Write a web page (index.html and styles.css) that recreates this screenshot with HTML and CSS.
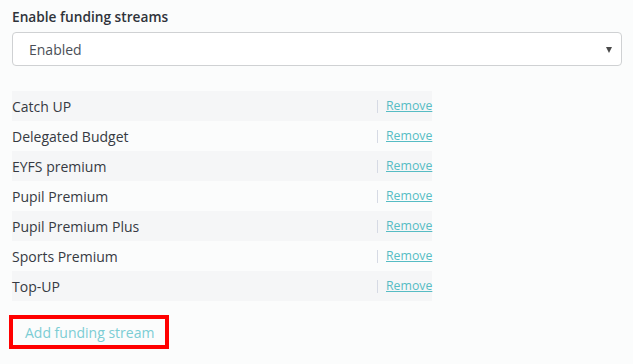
FILE: index.html
```html
<!DOCTYPE html>
<html>
<head>
<meta charset="utf-8">
<link rel="stylesheet" href="styles.css">
</head>
<body>
<div class="page">
  <div class="label">Enable funding streams</div>
  <div class="select">
    <span class="select-value">Enabled</span>
    <span class="caret"></span>
  </div>
  <div class="list">
    <div class="row striped"><span class="name">Catch UP</span><span class="action"><span class="sep"></span><a class="remove">Remove</a></span></div>
    <div class="row"><span class="name">Delegated Budget</span><span class="action"><span class="sep"></span><a class="remove">Remove</a></span></div>
    <div class="row striped"><span class="name">EYFS premium</span><span class="action"><span class="sep"></span><a class="remove">Remove</a></span></div>
    <div class="row"><span class="name">Pupil Premium</span><span class="action"><span class="sep"></span><a class="remove">Remove</a></span></div>
    <div class="row striped"><span class="name">Pupil Premium Plus</span><span class="action"><span class="sep"></span><a class="remove">Remove</a></span></div>
    <div class="row"><span class="name">Sports Premium</span><span class="action"><span class="sep"></span><a class="remove">Remove</a></span></div>
    <div class="row striped"><span class="name">Top-UP</span><span class="action"><span class="sep"></span><a class="remove">Remove</a></span></div>
  </div>
  <div class="add">Add funding stream</div>
</div>
</body>
</html>
```
FILE: styles.css
```css
html, body {
  margin: 0;
  padding: 0;
  background: #fbfcfc;
}
.page {
  padding: 7px 11px 0 12px;
  font-family: "Open Sans", "Liberation Sans", sans-serif;
  font-size: 14px;
  color: #363a42;
}
.label {
  font-weight: 600;
  font-size: 13.7px;
  line-height: 20px;
  color: #2f333a;
}
.select {
  margin-top: 5px;
  height: 32px;
  border: 1px solid #cfd1d3;
  border-radius: 4px;
  background: #ffffff;
  display: flex;
  align-items: center;
  justify-content: space-between;
  padding: 0 9px 0 16px;
}
.select-value {
  color: #4a4f57;
}
.caret {
  width: 0;
  height: 0;
  border-left: 3.5px solid transparent;
  border-right: 3.5px solid transparent;
  border-top: 6px solid #4a4a4a;
  margin-top: 1px;
}
.list {
  margin-top: 25px;
  width: 420px;
}
.row {
  height: 30px;
  display: flex;
  align-items: center;
  justify-content: space-between;
}
.row.striped {
  background: #f5f6f7;
}
.action {
  display: flex;
  align-items: center;
  width: 55px;
}
.sep {
  display: block;
  flex: none;
  width: 1px;
  height: 13px;
  background: #d6dae4;
  margin-right: 8px;
  margin-top: 1px;
}
.remove {
  font-size: 12.3px;
  color: #56bcc4;
  text-decoration: underline;
  line-height: 16px;
}
.add {
  margin-top: 14px;
  margin-left: -3px;
  height: 26px;
  border: 4px solid #ff0000;
  display: flex;
  align-items: center;
  padding-left: 12px;
  box-sizing: content-box;
  width: 140px;
  color: #7ccdd4;
}
```
